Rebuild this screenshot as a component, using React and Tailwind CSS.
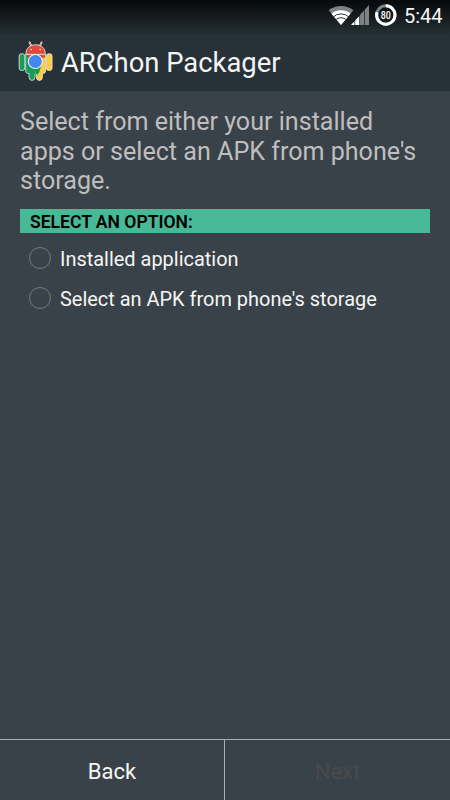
import React, { useState } from 'react';

const OPTIONS = [
  { id: 'installed', label: 'Installed application' },
  { id: 'storage', label: "Select an APK from phone's storage" },
];

const StatusIcons = () => (
  <svg className="block" width="70" height="30" viewBox="328 0 70 30">
    {/* wifi */}
    <clipPath id="wifi">
      <path d="M341 25 L328.6 10.2 Q341 1.8 353.4 10.2 Z" />
    </clipPath>
    <g clipPath="url(#wifi)">
      <rect x="328" y="4" width="26" height="22" fill="#7d8285" />
      <circle cx="341" cy="25.5" r="15.2" fill="#fff" />
      <circle cx="341" cy="25.5" r="11.6" fill="none" stroke="#2c3337" strokeWidth="1" />
      <circle cx="341" cy="25.5" r="7.8" fill="none" stroke="#2c3337" strokeWidth="1" />
    </g>
    {/* signal */}
    <path d="M351 25 L354.5 21.2 V25 Z M355.2 25 V20.4 L359.3 16 V25 Z" fill="#fff" />
    <path d="M360 25 V15 L364 10.6 V25 Z M364.7 25 V9.8 L369 5 V25 Z" fill="#7d8285" />
    {/* battery ring */}
    <circle cx="385.8" cy="15" r="9.2" fill="none" stroke="#7d8285" strokeWidth="3" />
    <circle
      cx="385.8"
      cy="15"
      r="9.2"
      fill="none"
      stroke="#fff"
      strokeWidth="3"
      pathLength="100"
      strokeDasharray="80 20"
      transform="rotate(-90 385.8 15)"
    />
    <text
      x="385.8"
      y="19"
      textAnchor="middle"
      fill="#fff"
      className="font-['Roboto',sans-serif] text-[11px] font-medium"
      textLength="10"
      lengthAdjust="spacingAndGlyphs"
    >
      80
    </text>
  </svg>
);

const AppLogo = () => (
  <svg className="block" width="36" height="43" viewBox="18 40 36 43">
    <clipPath id="body">
      <path d="M25.7 54.5 H45.5 V71 Q45.5 73.5 43.2 73.5 H42.4 V77 Q42.4 80.4 39.4 80.4 Q36.4 80.4 36.4 77 V73.5 H35 V77 Q35 80.4 32 80.4 Q29 80.4 29 77 V73.5 H28 Q25.7 73.5 25.7 71 Z" />
    </clipPath>
    <g stroke="#e9e5df" strokeWidth="0.9">
      <path d="M29.6 42.4 L31.3 46 M41.6 42.4 L39.9 46" fill="none" strokeWidth="1.9" strokeLinecap="round" />
      <path d="M29.6 42.4 L31.3 46 M41.6 42.4 L39.9 46" fill="none" stroke="#dc4a38" strokeWidth="0.6" />
      <path d="M25.9 54.3 C25.9 48 30 44.8 35.6 44.8 S45.3 48 45.3 54.3 Z" fill="#dc4a38" />
      <rect x="19.2" y="53.8" width="5.6" height="16.6" rx="2.2" fill="#149c58" />
      <rect x="46.4" y="53.8" width="5.6" height="16.6" rx="2.2" fill="#fdcb3d" />
    </g>
    <g clipPath="url(#body)">
      <path d="M25 54 H47 V82 H25 Z" fill="#149c58" />
      <path d="M38 57 H46 V82 H35.8 V77 Q40.5 72 41 65 Z" fill="#fdcb3d" />
      <path d="M27 54 H46 V57.8 H36 L30.5 62.5 Z" fill="#dc4a38" />
    </g>
    <path
      d="M25.7 54.5 V71 Q25.7 73.5 28 73.5 H29 V77 Q29 80.4 32 80.4 Q35 80.4 35 77 V74 H36.4 V77 Q36.4 80.4 39.4 80.4 Q42.4 80.4 42.4 77 V73.5 H43.2 Q45.5 73.5 45.5 71 V54.5 Z"
      fill="none"
      stroke="#e9e5df"
      strokeWidth="0.8"
    />
    <circle cx="35.3" cy="61.5" r="7" fill="#4386f3" stroke="#efeeec" strokeWidth="1.1" />
    <circle cx="31.2" cy="49.5" r="0.8" fill="#fff" />
    <circle cx="40.2" cy="49.5" r="0.8" fill="#fff" />
  </svg>
);

export default function App() {
  const [selected, setSelected] = useState(null);

  return (
    <div className="flex h-[800px] w-[450px] flex-col overflow-hidden bg-[#3a4249] font-['Roboto',sans-serif] text-[#f5f5f5]">
      <div className="h-[91px] shrink-0 bg-linear-to-b from-[#08090a] from-0% via-[#263238] via-[36px] to-[#263238]">
        {/* Status bar */}
        <div className="flex h-[30px] justify-end pr-2">
          <StatusIcons />
          <span className="ml-[6px] w-[38px] whitespace-nowrap pt-[1px] text-[20px] leading-[30px]">5:44</span>
        </div>
        {/* Action bar */}
        <div className="flex pl-[18px] pt-[10px]">
          <AppLogo />
          <h1 className="ml-[7px] whitespace-nowrap text-[27.4px] leading-[46px]">ARChon Packager</h1>
        </div>
      </div>

      <main className="flex-1 px-5 pt-[16px]">
        <p className="whitespace-nowrap text-[25.1px] leading-[29.5px] text-[#bebebe]">
          Select from either your installed
          <br />
          apps or select an APK from phone's
          <br />
          storage.
        </p>
        <h2 className="mt-[13.5px] h-6 bg-[#48b996] pl-[10px] text-[17.55px] font-semibold leading-[26px] text-black">
          SELECT AN OPTION:
        </h2>
        <div className="pt-[5px]">
          {OPTIONS.map((option) => (
            <button
              key={option.id}
              onClick={() => setSelected(option.id)}
              className="flex h-10 w-full items-center pl-[9px] text-left"
            >
              <span className="flex size-[22px] shrink-0 items-center justify-center rounded-full border border-[#737980]">
                {selected === option.id && <span className="size-3 rounded-full bg-[#48b996]" />}
              </span>
              <span className="ml-[9px] whitespace-nowrap pt-[2px] text-[19.95px] leading-[38px]">{option.label}</span>
            </button>
          ))}
        </div>
      </main>

      {/* Wizard buttons */}
      <footer className="flex h-[61px] shrink-0 border-t border-[#a9adab]">
        <button className="w-[225px] border-r border-[#a9adab] pt-[3px] text-[22px]">Back</button>
        <button className="w-[225px] pt-[3px] text-[22px] text-[#4a4a4b]">Next</button>
      </footer>
    </div>
  );
}
